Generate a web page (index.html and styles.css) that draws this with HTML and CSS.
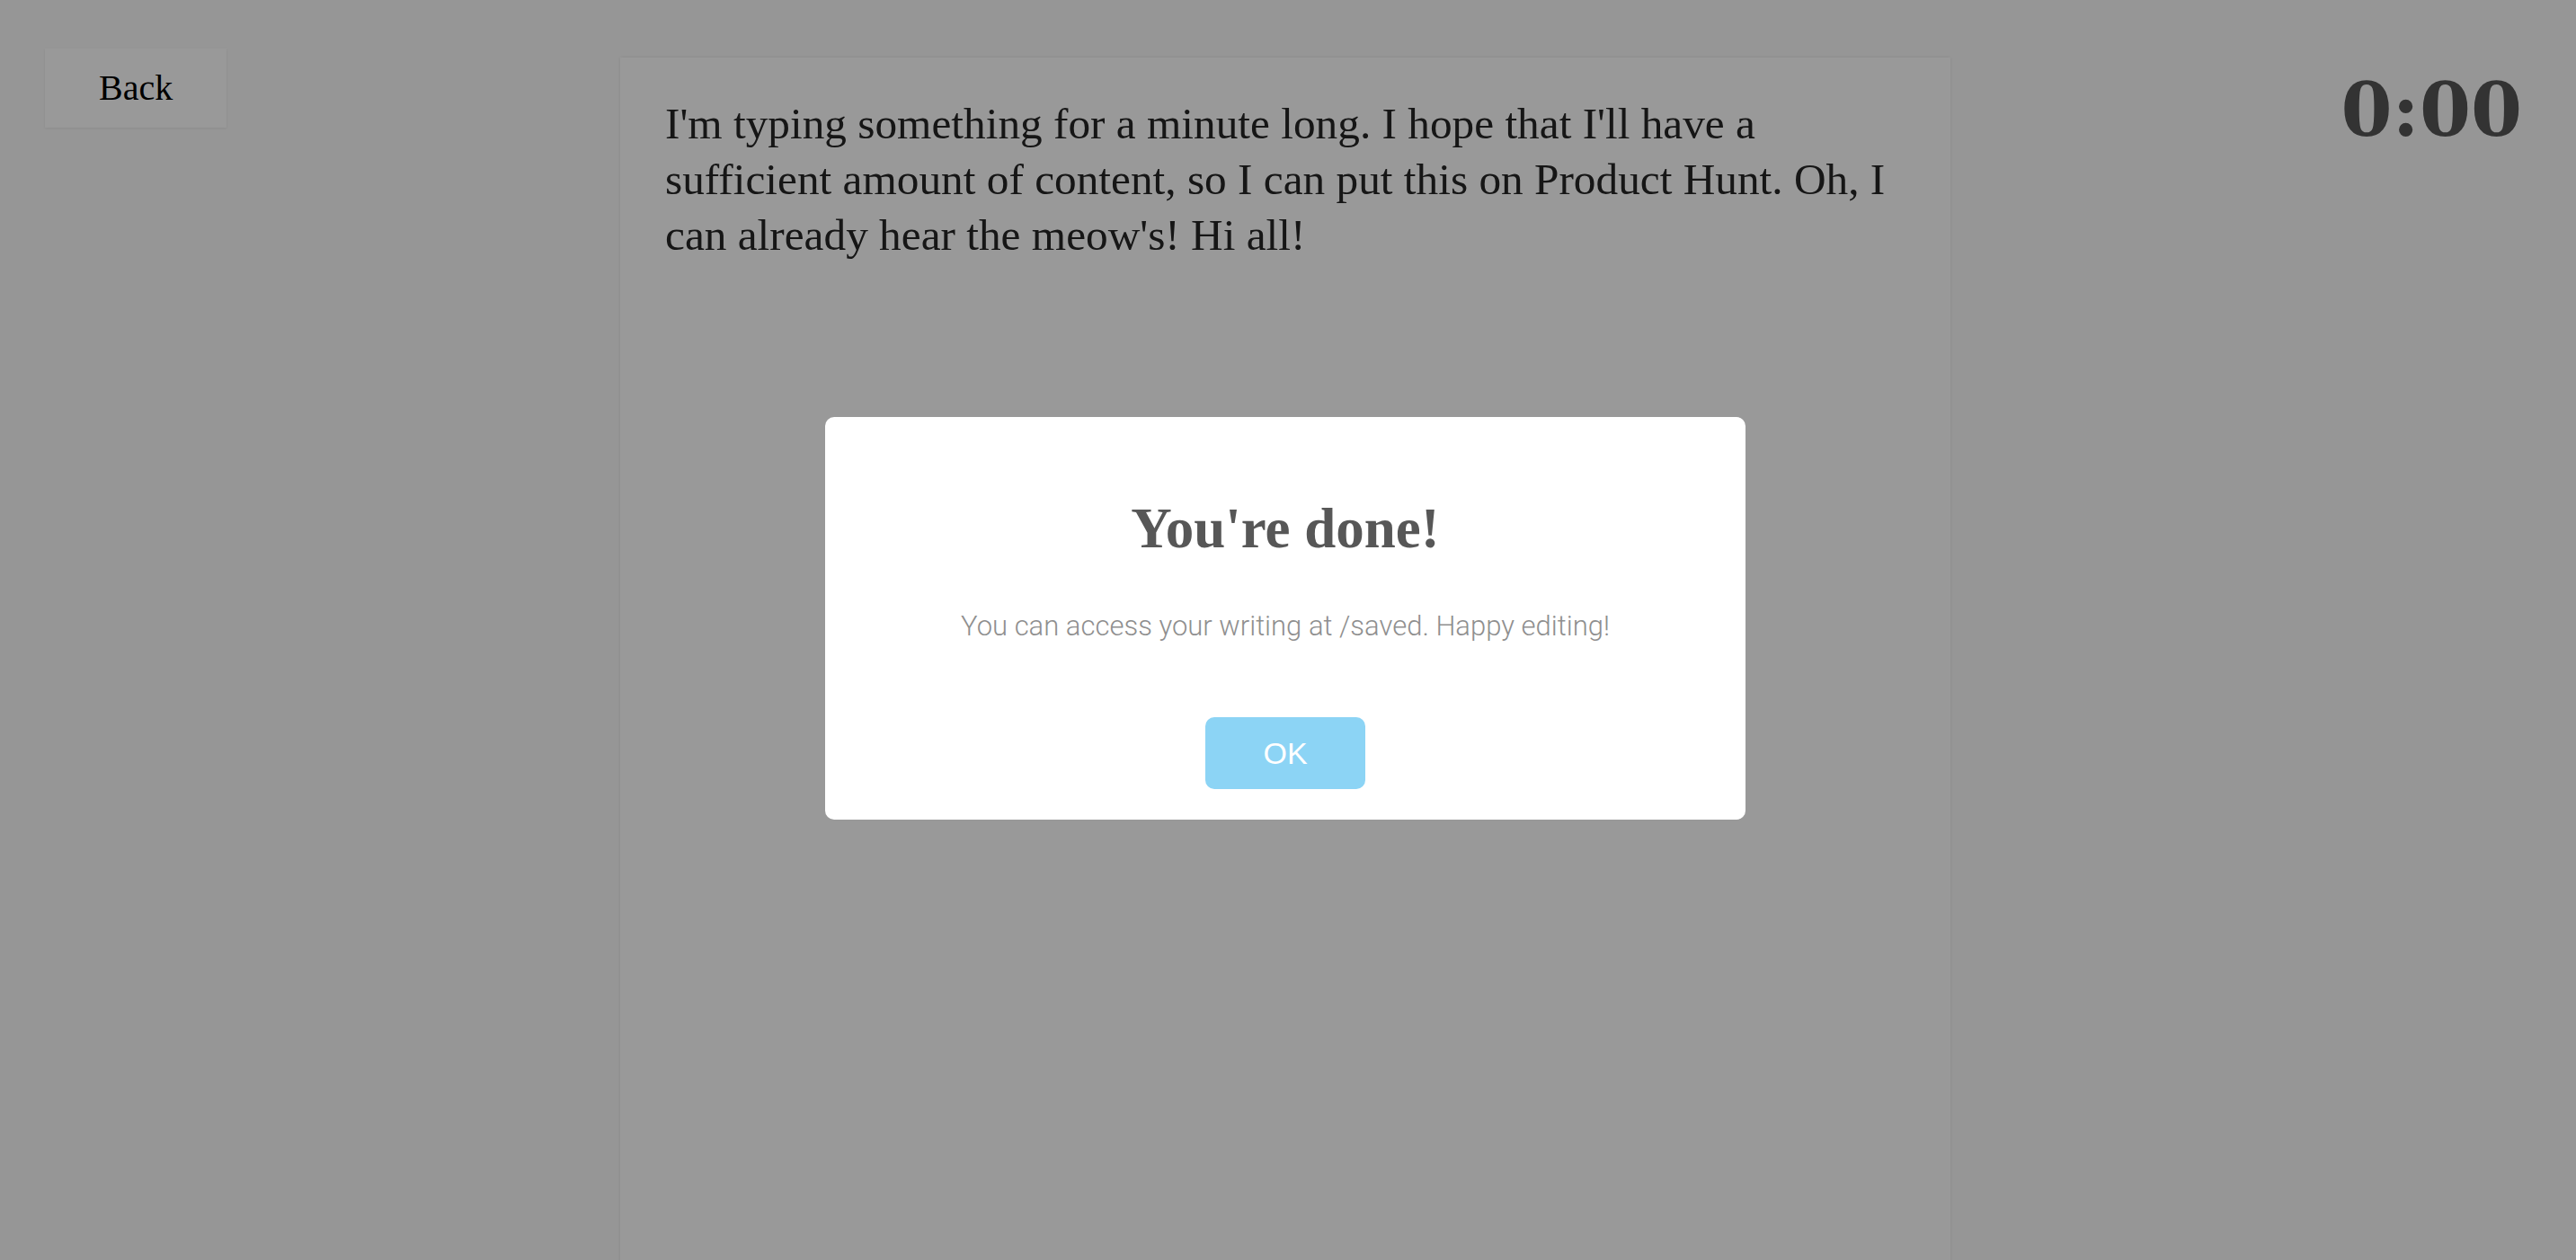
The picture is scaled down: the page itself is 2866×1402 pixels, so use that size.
FILE: index.html
```html
<!DOCTYPE html>
<html lang="en">
<head>
    <meta charset="UTF-8">
    <meta name="viewport" content="width=device-width, initial-scale=1.0">
    <title>Write for a minute</title>
    <link rel="stylesheet" href="styles.css">
</head>
<body>
    <!-- Page -->
    <div class="page">
        <div class="left-col">
            <button class="back-btn">Back</button>
        </div>
        <div class="paper">
            <p class="writing">I'm typing something for a minute long. I hope that I'll have a sufficient amount of content, so I can put this on Product Hunt. Oh, I can already hear the meow's! Hi all!</p>
        </div>
        <div class="right-col">
            <div class="timer">0:00</div>
        </div>
    </div>

    <!-- Done dialog -->
    <div class="overlay"></div>
    <div class="dialog">
        <h2 class="dialog-title">You're done!</h2>
        <p class="dialog-text">You can access your writing at /saved. Happy editing!</p>
        <div class="dialog-actions">
            <button class="ok-btn">OK</button>
        </div>
    </div>
</body>
</html>
```

FILE: styles.css
```css
/* Base */
body {
    margin: 0;
    background: #fbfbfb;
    font-family: 'Liberation Serif', serif;
    color: #333;
    overflow: hidden;
}
.page {
    display: grid;
    grid-template-columns: 1fr 1480px 1fr;
    min-height: 100vh;
}
.left-col {
    padding: 54px 0 0 50px;
}
.back-btn {
    background: #fff;
    border: none;
    box-shadow: 0 1px 3px rgba(0, 0, 0, 0.08);
    font-family: 'Liberation Serif', serif;
    font-size: 40px;
    line-height: 40px;
    color: #000;
    padding: 24px 60px;
    cursor: pointer;
}
.paper {
    background: #fff;
    margin-top: 64px;
    min-height: 1500px;
    padding: 43px 50px;
    box-sizing: border-box;
    box-shadow: 0 0 4px rgba(0, 0, 0, 0.1);
    position: relative;
    left: -3px;
}
.writing {
    margin: 0;
    font-size: 49.3px;
    line-height: 62px;
    color: #262626;
}
.right-col {
    display: flex;
    justify-content: flex-end;
    padding: 72px 60px 0 0;
}
.timer {
    font-family: 'DejaVu Serif', serif;
    font-weight: bold;
    font-size: 82px;
    line-height: 100px;
    color: #555;
}

/* Dialog */
.overlay {
    position: fixed;
    inset: 0;
    background: rgba(0, 0, 0, 0.4);
}
.dialog {
    position: fixed;
    left: 50%;
    top: 50%;
    width: 956px;
    margin-left: -515px;
    margin-top: -237px;
    padding: 34px;
    background: #fff;
    border-radius: 10px;
    text-align: center;
}
.dialog-title {
    margin: 50px 0;
    font-family: 'Liberation Serif', serif;
    font-weight: bold;
    font-size: 63px;
    line-height: 80px;
    color: #575757;
}
.dialog-text {
    margin: 0;
    font-family: 'Helvetica Neue', Roboto, sans-serif;
    font-weight: 300;
    font-size: 31px;
    line-height: 38px;
    color: #8f8f8f;
}
.dialog-actions {
    margin-top: 82px;
}
.ok-btn {
    background: #8cd4f5;
    color: #fff;
    border: none;
    border-radius: 10px;
    font-family: 'Helvetica Neue', 'Liberation Sans', sans-serif;
    font-size: 34px;
    line-height: 40px;
    padding: 20px 64px;
    cursor: pointer;
}
```
